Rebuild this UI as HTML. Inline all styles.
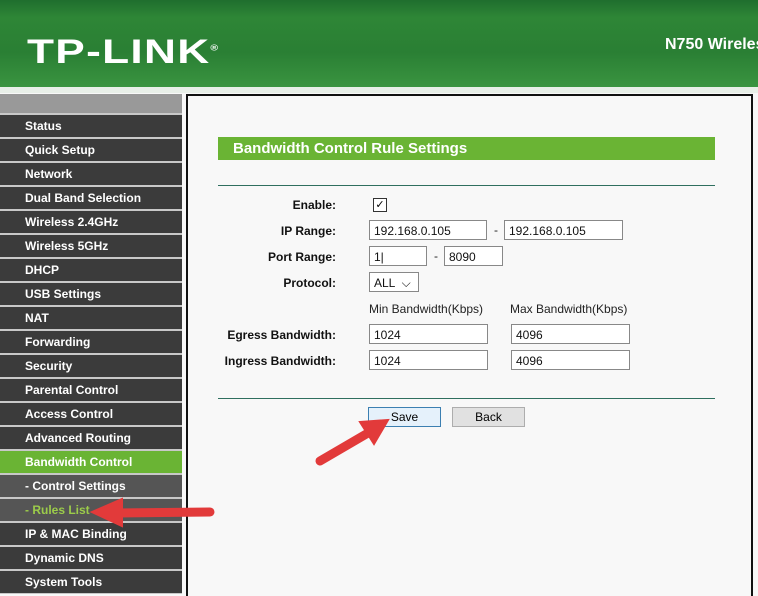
<!DOCTYPE html><html><head><style>
body{margin:0;width:758px;height:594px;overflow:hidden;background:#f8f8f8;font-family:"Liberation Sans",Arial,sans-serif;position:relative}
.hdr{position:absolute;left:0;top:0;width:758px;height:87px;background:linear-gradient(#1f6e2e 0,#2e8636 20%,#2a7f34 60%,#3a9440 100%)}
.strip{position:absolute;left:0;top:87px;width:758px;height:6px;background:#e8efe8}
.logo{position:absolute;left:27px;top:33px;color:#fff;font-weight:bold;font-size:34px;letter-spacing:1px;transform:scaleX(1.3);transform-origin:left}
.model{position:absolute;left:665px;top:36px;color:#fff;font-weight:bold;font-size:16px;white-space:nowrap}
.side{position:absolute;left:0;top:94px;width:182px;height:500px;background:#c8c8c8}
.side .top{height:19px;background:#999}
.side div.i{height:22px;margin-top:2px;background:#3b3b3b;color:#fff;font-weight:bold;font-size:12px;line-height:22px;padding-left:25px}
.side div.g{background:#6ab434}
.side div.s{background:#555}
.main{position:absolute;left:186px;top:94px;width:563px;height:500px;border-left:2px solid #111;border-right:2px solid #111;border-top:2px solid #111;background:#f8f8f8}
.title{position:absolute;left:218px;top:137px;width:497px;height:23px;background:#6ab434;color:#fff;font-weight:bold;font-size:15px;line-height:23px;padding-left:15px;box-sizing:border-box}
.ln{position:absolute;left:218px;width:497px;height:1px;background:#2f6f5f}
.lb{position:absolute;font-size:12px;font-weight:bold;color:#111;text-align:right;width:150px;left:186px}
.in{position:absolute;height:20px;border:1px solid #888;background:#fff;font-size:12px;line-height:20px;padding-left:4px;box-sizing:border-box;color:#111}
.t{position:absolute;font-size:12px;color:#222}
.btn{position:absolute;height:20px;font-size:12px;line-height:18px;text-align:center;box-sizing:border-box}
</style></head><body>
<div class="hdr"></div><div class="strip"></div>
<div class="logo">TP-LINK<sup style="font-size:8px">®</sup></div>
<div class="model">N750 Wireless</div>
<div class="side"><div class="top"></div>
<div class="i">Status</div><div class="i">Quick Setup</div><div class="i">Network</div><div class="i">Dual Band Selection</div><div class="i">Wireless 2.4GHz</div><div class="i">Wireless 5GHz</div><div class="i">DHCP</div><div class="i">USB Settings</div><div class="i">NAT</div><div class="i">Forwarding</div><div class="i">Security</div><div class="i">Parental Control</div><div class="i">Access Control</div><div class="i">Advanced Routing</div><div class="i g">Bandwidth Control</div><div class="i s">- Control Settings</div><div class="i s" style="color:#9ccc4a">- Rules List</div><div class="i">IP &amp; MAC Binding</div><div class="i">Dynamic DNS</div><div class="i">System Tools</div>
</div>
<div class="main"></div>
<div class="title">Bandwidth Control Rule Settings</div>
<div class="ln" style="top:185px"></div><div class="ln" style="top:398px"></div>
<div class="lb" style="top:198px">Enable:</div>
<div style="position:absolute;left:373px;top:198px;width:12px;height:12px;border:1px solid #333;background:#fff;font-size:11px;line-height:12px;text-align:center">✓</div>
<div class="lb" style="top:224px">IP Range:</div>
<div class="in" style="left:369px;top:220px;width:118px">192.168.0.105</div><div class="t" style="left:494px;top:223px">-</div>
<div class="in" style="left:504px;top:220px;width:119px">192.168.0.105</div>
<div class="lb" style="top:250px">Port Range:</div>
<div class="in" style="left:369px;top:246px;width:58px">1|</div><div class="t" style="left:434px;top:249px">-</div>
<div class="in" style="left:444px;top:246px;width:59px">8090</div>
<div class="lb" style="top:276px">Protocol:</div>
<div class="in" style="left:369px;top:272px;width:50px">ALL &nbsp;⌵</div>
<div class="t" style="left:369px;top:302px">Min Bandwidth(Kbps)</div><div class="t" style="left:510px;top:302px">Max Bandwidth(Kbps)</div>
<div class="lb" style="top:328px">Egress Bandwidth:</div>
<div class="in" style="left:369px;top:324px;width:119px">1024</div><div class="in" style="left:511px;top:324px;width:119px">4096</div>
<div class="lb" style="top:354px">Ingress Bandwidth:</div>
<div class="in" style="left:369px;top:350px;width:119px">1024</div><div class="in" style="left:511px;top:350px;width:119px">4096</div>
<div class="btn" style="left:368px;top:407px;width:73px;border:1px solid #3c7fb1;background:#e5f1fb">Save</div>
<div class="btn" style="left:452px;top:407px;width:73px;border:1px solid #adadad;background:#e1e1e1">Back</div>
<svg style="position:absolute;left:0;top:0" width="758" height="594">
<g fill="#e23a3a" stroke="#e23a3a" stroke-linecap="round">
<line x1="320" y1="461" x2="368" y2="433" stroke-width="9"/>
<polygon points="388,420 360,422 374,444" stroke-width="2"/>
<line x1="210" y1="512" x2="115" y2="513" stroke-width="9"/>
<polygon points="92,512 122,499 122,526" stroke-width="2"/>
</g></svg>
</body></html>
